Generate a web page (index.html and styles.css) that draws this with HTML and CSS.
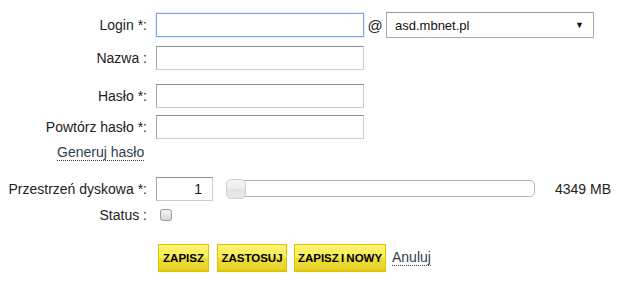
FILE: index.html
```html
<!DOCTYPE html>
<html>
<head>
  <meta charset="utf-8">
  <title>Konto</title>
  <link rel="stylesheet" href="styles.css">
</head>
<body>
<div class="form">

  <div class="row row_login">
    <label class="lbl">Login *:</label>
    <input type="text" class="txt focus">
    <span class="at">@</span>
    <div class="select"><span>asd.mbnet.pl</span><span class="arrow">&#9660;</span></div>
  </div>

  <div class="row row_nazwa">
    <label class="lbl">Nazwa :</label>
    <input type="text" class="txt">
  </div>

  <div class="row row_haslo">
    <label class="lbl">Hasło *:</label>
    <input type="password" class="txt">
  </div>

  <div class="row row_powtorz">
    <label class="lbl">Powtórz hasło *:</label>
    <input type="password" class="txt">
  </div>

  <div class="row row_gen">
    <a class="lnk gen">Generuj hasło</a>
  </div>

  <div class="row row_disk">
    <label class="lbl">Przestrzeń dyskowa *:</label>
    <input type="text" class="txt num" value="1">
    <div class="slider">
      <div class="track"></div>
      <div class="handle"></div>
    </div>
    <span class="mb">4349 MB</span>
  </div>

  <div class="row row_status">
    <label class="lbl">Status :</label>
    <span class="chk"></span>
  </div>

  <div class="row row_btn">
    <span class="lbl"></span>
    <button class="btn b_zapisz">ZAPISZ</button>
    <button class="btn b_zastosuj">ZASTOSUJ</button>
    <button class="btn b_nowy">ZAPISZ I NOWY</button>
    <a class="lnk anuluj">Anuluj</a>
  </div>

</div>
</body>
</html>
```

FILE: styles.css
```css
body { margin:0px; padding:0px; background:#fff;
  font-family:"Liberation Sans", Arial, sans-serif; font-size:14px; color:#222; }

.form { padding-top:12px; }

/* wiersze formularza */
.row { display:flex; align-items:center; }
.lbl { width:147px; flex:none; text-align:right; padding-right:9px; }

.row_login { height:26px; }
.row_nazwa { height:24px; margin-top:8px; }
.row_haslo { height:24px; margin-top:14px; }
.row_powtorz { height:24px; margin-top:7px; }
.row_gen { height:20px; margin-top:4px; }
.row_disk { height:24px; margin-top:14px; }
.row_status { height:16px; margin-top:6px; }
.row_btn { height:28px; margin-top:21px; }

/* pola */
.txt { box-sizing:border-box; width:208px; height:24px; margin:0px; padding:2px 4px;
  border:1px solid #ccc; border-top-color:#8e8e8e; border-left-color:#a8a8a8;
  background:#fff; font:14px "Liberation Sans", Arial, sans-serif; color:#111; outline:none; }
.focus { border-color:#7aa2e4; box-shadow:0 0 2px #a9c4f0; }

.at { width:22px; text-align:center; font-size:15px; }

.select { box-sizing:border-box; width:208px; height:26px; border:1px solid #aaa;
  border-top-color:#999; display:flex; align-items:center; justify-content:space-between;
  padding:0px 9px 0px 8px; font-size:13px; color:#111; }
.select .arrow { font-size:9px; color:#111; }

.lnk { color:#2f3e4c; border-bottom:1px dotted #2f3e4c; line-height:15px; cursor:pointer; }
.gen { margin-left:57px; }
.anuluj { margin-left:6px; }

/* przestrzen dyskowa */
.num { width:57px; text-align:right; padding-right:10px; }
.slider { position:relative; width:309px; height:20px; margin-left:13px; }
.track { position:absolute; left:2px; top:1px; width:307px; height:17px; box-sizing:border-box;
  border:1px solid #b4b4b4; border-radius:5px; background:#fff; }
.handle { position:absolute; left:0px; top:0px; width:20px; height:20px; box-sizing:border-box;
  border:1px solid #cfcfcf; border-radius:5px;
  background:linear-gradient(#f4f4f4 0%, #ececec 50%, #e2e2e2 51%, #e8e8e8 100%); }
.mb { margin-left:20px; }

.chk { display:block; width:12px; height:12px; box-sizing:border-box; margin-left:4px;
  border:1px solid #9a9a9a; border-radius:3px;
  background:linear-gradient(#f2f2f2, #d8d8d8); }

/* przyciski */
.btn { box-sizing:border-box; height:28px; margin:0px; padding:0px;
  border:1px solid #e2c300; border-bottom-width:2px; text-align:center; white-space:nowrap;
  background:linear-gradient(#fbf574 0%, #f5ec52 50%, #ecdc33 51%, #e8d62e 100%);
  font:bold 11.5px "Liberation Sans", Arial, sans-serif; color:#000; cursor:pointer; }
.row_btn .lbl { width:158px; padding:0px; }
.b_zapisz { width:51px; }
.b_zastosuj { width:70px; margin-left:8px; }
.b_nowy { width:92px; margin-left:7px; word-spacing:-1px; }
```
